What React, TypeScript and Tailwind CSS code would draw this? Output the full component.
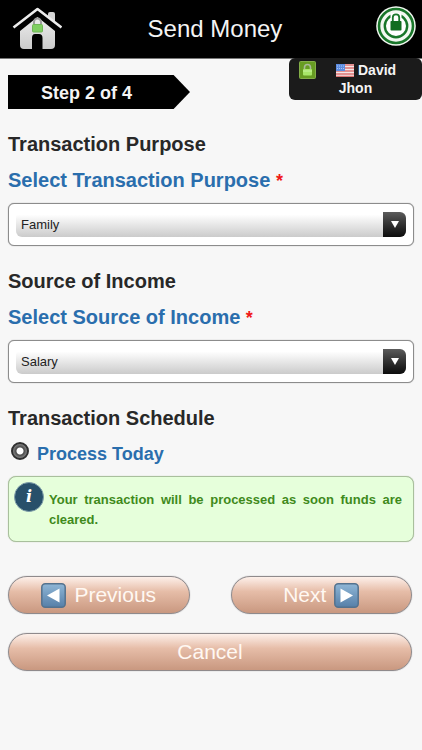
import { useState } from 'react'

const buttonStyle =
  'flex h-[38px] items-center justify-center gap-2 rounded-full border border-[#8f8a8c] bg-linear-to-b from-[#fdf0ea] via-[#e6bda8] via-40% to-[#c99880] text-[21px] text-[#fff8f2] shadow-[0_0_1px_#8f8a8c]'

function HomeIcon() {
  return (
    <svg width="50" height="44" viewBox="0 0 50 44">
      <defs>
        <linearGradient id="house" x1="0" y1="0" x2="0" y2="1">
          <stop offset="0" stopColor="#ededed" />
          <stop offset="1" stopColor="#cbcbcb" />
        </linearGradient>
      </defs>
      <path d="M36 12 V7 q0-2 2-2 h3 q2 0 2 2 v10z" fill="#d6d6d6" />
      <path d="M25.500 10 L8 24 V38 q0 4 4 4 h8 V31 q0-4 3-4 h4 q3.500 0 3.500 4 v11 h8.500 q4 0 4-4 V24z" fill="url(#house)" />
      <path d="M3 22 L25.500 4.500 L48 22" fill="none" stroke="#000" strokeWidth="5" />
      <path d="M1.500 20.500 L25.500 2 L49.500 20.500" fill="none" stroke="#ececec" strokeWidth="2.600" strokeLinejoin="round" />
      <path d="M22 18 v-3 a3.500 3.500 0 0 1 7 0 v3" fill="none" stroke="#9d9d9d" strokeWidth="2" />
      <rect x="20.500" y="17.500" width="10" height="7.500" rx="1" fill="#80cf62" stroke="#6fb556" />
    </svg>
  )
}

function SecureIcon() {
  return (
    <svg width="40" height="40" viewBox="0 0 40 40">
      <circle cx="20" cy="20" r="19.800" fill="#f3f8f2" />
      <circle cx="20" cy="20" r="17" fill="none" stroke="#19762a" strokeWidth="2.600" />
      <circle cx="20" cy="20" r="11.200" fill="#fff" stroke="#19762a" strokeWidth="2.400" />
      <path d="M14.500 17 V9 q0-2 2-2 h7 q2 0 2 2 v8z" fill="#fff" />
      <path d="M16.800 16 v-4.500 a3.200 3.200 0 0 1 6.400 0 V16" fill="none" stroke="#19762a" strokeWidth="1.800" />
      <rect x="14.500" y="15" width="11" height="9.500" rx=".8" fill="#126d20" />
    </svg>
  )
}

function LockBadge() {
  return (
    <svg width="17" height="18" viewBox="0 0 17 18">
      <rect x=".5" y=".5" width="16" height="17" rx="1" fill="#679c22" stroke="#84ae48" />
      <path d="M5.500 9 V6.500 a3 3 0 0 1 6 0 V9" fill="none" stroke="#a9b998" strokeWidth="1.600" />
      <rect x="4" y="8" width="9" height="6.500" rx="1" fill="#a8e668" />
      <path d="M4 10h9" stroke="#c8f3a0" />
    </svg>
  )
}

function Flag() {
  return (
    <svg width="18" height="13" viewBox="0 0 18 13">
      <rect width="18" height="13" fill="#f4e6e6" />
      <path d="M0 1h18M0 4h18M0 7h18M0 10h18M0 12.500h18" stroke="#dc7474" strokeWidth="1.300" />
      <rect width="9" height="7" fill="#5c8ce0" />
      <path d="M1 2h7M1 4.500h7" stroke="#a9c5f4" strokeDasharray="1 1" />
    </svg>
  )
}

function ArrowTile({ direction }: { direction: 'left' | 'right' }) {
  return (
    <svg width="25" height="25" viewBox="0 0 25 25">
      <defs>
        <linearGradient id={'tile-' + direction} x1="0" y1="0" x2="0" y2="1">
          <stop offset="0" stopColor="#8fb6d6" />
          <stop offset="1" stopColor="#567fa8" />
        </linearGradient>
      </defs>
      <rect x=".8" y=".8" width="23.400" height="23.400" rx="3.500" fill={'url(#tile-' + direction + ')'} stroke="#54728e" strokeWidth="1.500" />
      <path d={direction === 'left' ? 'M18.500 5.500 V19.500 L6 12.500z' : 'M6.500 5.500 V19.500 L19 12.500z'} fill="#fff" />
    </svg>
  )
}

interface SelectFieldProps {
  id: string
  title: string
  label: string
  options: string[]
}

function SelectField({ id, title, label, options }: SelectFieldProps) {
  const [value, setValue] = useState(options[0])

  return (
    <section className="mb-[17px]">
      <h2 className="text-xl/9 font-bold text-[#282828]">{title}</h2>
      <label htmlFor={id} className="block text-xl/9 font-bold text-[#2a6ead]">
        {label} <span className="text-lg/none text-[#f01818]">*</span>
      </label>
      <div className="mt-[5px] rounded-md border border-[#8c8c8c] bg-white px-[7px] py-2 shadow-[0_0_1px_#8c8c8c]">
        <div className="relative">
          <select
            id={id}
            value={value}
            onChange={(e) => setValue(e.target.value)}
            className="block h-[25px] w-full appearance-none rounded-md bg-linear-to-b from-white from-10% to-[#cbcbcb] pl-[5px] pr-7 text-[13px] text-[#222]"
          >
            {options.map((option) => (
              <option key={option}>{option}</option>
            ))}
          </select>
          <span className="pointer-events-none absolute inset-y-0 right-0 flex w-[23px] items-center justify-center rounded-r-md bg-linear-to-b from-[#5c5c5c] to-[#0c0c0c]">
            <svg width="8" height="7" viewBox="0 0 8 7">
              <path d="M0 0h8L4 7z" fill="#fff" />
            </svg>
          </span>
        </div>
      </div>
    </section>
  )
}

export default function App() {
  const [schedule, setSchedule] = useState('today')

  return (
    <div className="min-h-screen bg-[#f7f7f7] font-['Liberation_Sans',Arial,sans-serif]">
      <header className="grid h-[59px] grid-cols-[1fr_auto_1fr] items-center border-b border-[#777] bg-black">
        <a href="#home" aria-label="Home" className="ml-3 justify-self-start">
          <HomeIcon />
        </a>
        <h1 className="pl-2 text-2xl text-[#f4f4f4]">Send Money</h1>
        <a href="#security" aria-label="Security" className="mr-1.5 mb-1.5 justify-self-end">
          <SecureIcon />
        </a>
      </header>

      <div className="flex items-start justify-between">
        <div className="mt-4 ml-2 flex h-[34px] w-[182px] items-center bg-black pl-[33px] pt-0.5 text-lg font-bold text-[#f4f4f4] [clip-path:polygon(0_0,91%_0,100%_50%,91%_100%,0_100%)]">
          Step 2 of 4
        </div>
        <div className="-mt-px w-[133px] rounded-md bg-[#1b1b1b] pt-[3px] pb-[3px] text-sm/[18px] font-bold text-[#f4f4f4]">
          <div className="flex items-center pl-2.5">
            <LockBadge />
            <span className="ml-5 flex items-center gap-1">
              <Flag />
              David
            </span>
          </div>
          <div className="text-center">Jhon</div>
        </div>
      </div>

      <form className="px-2 pt-[17px]" onSubmit={(e) => e.preventDefault()}>
        <SelectField
          id="purpose"
          title="Transaction Purpose"
          label="Select Transaction Purpose"
          options={['Family', 'Business', 'Education']}
        />
        <SelectField
          id="income"
          title="Source of Income"
          label="Select Source of Income"
          options={['Salary', 'Savings', 'Investment']}
        />

        <h2 className="text-xl/9 font-bold text-[#282828]">Transaction Schedule</h2>
        <div className="flex h-9 items-center gap-2 pl-[3px]">
          <input
            type="radio"
            id="today"
            name="schedule"
            checked={schedule === 'today'}
            onChange={() => setSchedule('today')}
            className="mb-1.5 size-[18px] appearance-none rounded-full border-2 border-[#303030] bg-[radial-gradient(circle,#fff_3px,#4a4a4a_4px,#858585_7px)]"
          />
          <label htmlFor="today" className="text-lg font-bold text-[#2a6ead]">
            Process Today
          </label>
        </div>

        <div className="mt-1 flex items-start gap-[5px] rounded-lg border border-[#a9bf9d] bg-[#e6ffdb] pt-[5px] pr-[11px] pb-[11px] pl-[5px] shadow-[0_0_1px_#a9bf9d]">
          <span className="flex size-[30px] shrink-0 items-center justify-center rounded-full border border-[#7f9eaa] bg-[#28506a] font-['DejaVu_Serif',serif] text-base font-bold text-white italic">
            i
          </span>
          <p className="pt-2 text-justify text-[13px]/5 font-bold text-[#3f8a1b]">
            Your transaction will be processed as soon funds are cleared.
          </p>
        </div>

        <div className="mt-[34px] flex gap-[41px] pr-0.5">
          <button type="button" className={buttonStyle + ' flex-1'}>
            <ArrowTile direction="left" />
            Previous
          </button>
          <button type="submit" className={buttonStyle + ' flex-1'}>
            Next
            <ArrowTile direction="right" />
          </button>
        </div>
        <div className="mt-[19px] pr-0.5">
          <button type="button" className={buttonStyle + ' w-full'}>
            Cancel
          </button>
        </div>
      </form>
    </div>
  )
}
